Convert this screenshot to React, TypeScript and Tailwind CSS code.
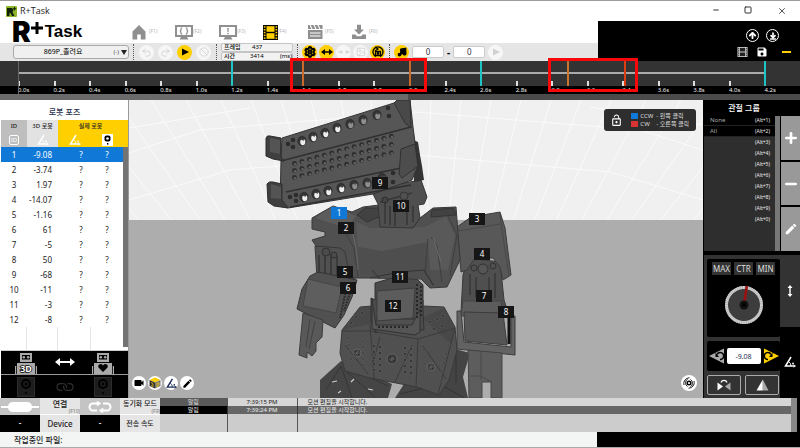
import { useState } from 'react';
import {
  ArrowDownToLine,
  ArrowUp,
  Ban,
  Image as ImageIcon,
  Link,
  Minus,
  Music,
  Plus,
  Redo2,
  Settings,
  Square,
  Undo2,
  X,
} from 'lucide-react';
import { MdEdit, MdLockOpen, MdSave, MdVideocam } from 'react-icons/md';

const poses = [
  { id: 1, angle: '-9.08' },
  { id: 2, angle: '-3.74' },
  { id: 3, angle: '1.97' },
  { id: 4, angle: '-14.07' },
  { id: 5, angle: '-1.16' },
  { id: 6, angle: '61' },
  { id: 7, angle: '-5' },
  { id: 8, angle: '50' },
  { id: 9, angle: '-68' },
  { id: 10, angle: '-11' },
  { id: 11, angle: '-3' },
  { id: 12, angle: '-8' },
];

const joints = [
  { id: 1, x: 339, y: 213 },
  { id: 2, x: 346, y: 228 },
  { id: 3, x: 477, y: 219 },
  { id: 4, x: 482, y: 254 },
  { id: 5, x: 345, y: 272 },
  { id: 6, x: 348, y: 288 },
  { id: 7, x: 484, y: 296 },
  { id: 8, x: 506, y: 312 },
  { id: 9, x: 380, y: 183 },
  { id: 10, x: 401, y: 206 },
  { id: 11, x: 400, y: 277 },
  { id: 12, x: 393, y: 306 },
];

const keyframes = [
  { time: 1.2, color: 'bg-[#1fc4c4]' },
  { time: 1.6, color: 'bg-[#c86a2c]' },
  { time: 2.2, color: 'bg-[#c86a2c]' },
  { time: 2.6, color: 'bg-[#1fc4c4]' },
  { time: 3.09, color: 'bg-[#c8742c]' },
  { time: 3.41, color: 'bg-[#e03c14]' },
  { time: 4.2, color: 'bg-[#1fc4c4]' },
];

const ranges = [
  { from: 1.53, to: 2.3 },
  { from: 2.98, to: 3.49 },
];

const groups = ['None', 'All', '', '', '', '', '', '', '', ''];

const ticks = Array.from({ length: 22 }, (_, i) => (i * 0.2).toFixed(1) + 's');

// the ruler has 22 steps of 0.2 seconds
const toPercent = (time: number) => (time / 4.4) * 100;

function AngleIcon({ className }: { className?: string }) {
  return (
    <svg viewBox="0 0 12 12" className={className} fill="none" stroke="currentColor">
      <path d="M7 1 L1.5 10 H11" strokeWidth="1.5" />
      <path d="M4.5 5.5 A5 5 0 0 1 7 10" strokeWidth="0.9" />
      <circle cx="9" cy="7.5" r="0.9" fill="currentColor" strokeWidth="0" />
      <path d="M9.5 8.8 L11.5 10 L9.5 11.2" strokeWidth="0.8" />
    </svg>
  );
}

function FilmIcon({ className, screen }: { className?: string; screen: string }) {
  return (
    <svg viewBox="0 0 15 15" className={className}>
      <rect width="15" height="15" fill="currentColor" />
      <rect x="3.5" y="1.2" width="8" height="5.6" fill={screen} />
      <rect x="3.5" y="8.2" width="8" height="5.6" fill={screen} />
      {[1.2, 4, 6.8, 9.6, 12.4].map((y) => (
        <g key={y} fill={screen}>
          <rect x="0.8" y={y} width="1.7" height="1.5" />
          <rect x="12.5" y={y} width="1.7" height="1.5" />
        </g>
      ))}
    </svg>
  );
}

function TabIcon({ name }: { name: string }) {
  if (name === 'motion') {
    return <FilmIcon className="h-[15px] w-[15px] text-black" screen="#ffcf00" />;
  }
  return (
    <svg viewBox="0 0 18 16" className="h-4 w-[18px] text-[#8f8f8f]" fill="currentColor">
      {name === 'home' && <path d="M8 1 L1.5 7.5 V15.5 H6.2 V10.5 H9.8 V15.5 H14.5 V7.5 Z" />}
      {(name === 'task' || name === 'alert') && (
        <g>
          <path d="M0 1 H18 V13 H0 Z M2 3 V11 H16 V3 Z" fillRule="evenodd" />
          <path d="M6 13 H12 L13.5 15.5 H4.5 Z" />
        </g>
      )}
      {name === 'task' && (
        <path
          d="M7.2 3.8 Q6 3.8 6 5 Q6 7 4.8 7 Q6 7 6 9 Q6 10.2 7.2 10.2 M10.8 3.8 Q12 3.8 12 5 Q12 7 13.2 7 Q12 7 12 9 Q12 10.2 10.8 10.2"
          fill="none"
          stroke="currentColor"
          strokeWidth="1.3"
        />
      )}
      {name === 'alert' && <path d="M8.2 4 H9.8 L9.5 8.2 H8.5 Z M8.3 9 H9.7 V10.3 H8.3 Z" />}
      {name === 'clip' && (
        <g>
          <path d="M1 1 H15.5 V5 H1 Z M1 6 H15.5 V15 H1 Z" />
          <path d="M3 1 L5 5 M7 1 L9 5 M11 1 L13 5 M3 9 H13.5 M3 12 H13.5" stroke="white" strokeWidth="1.1" />
        </g>
      )}
      {name === 'download' && (
        <path d="M6 0.8 H10 V5.5 H13 L8 10.5 L3 5.5 H6 Z M1 10.5 H4.5 L6 12.2 H10 L11.5 10.5 H15 V15 H1 Z" />
      )}
    </svg>
  );
}

function Round({ label, tone, children }: { label: string; tone: 'on' | 'off'; children: React.ReactNode }) {
  return (
    <button
      aria-label={label}
      className={`flex h-[15px] w-[15px] shrink-0 items-center justify-center rounded-full ${
        tone === 'on' ? 'bg-[#ffcf00] text-black' : 'bg-[#f6f6f6] text-[#d2d2d2]'
      }`}
    >
      {children}
    </button>
  );
}

function Dots() {
  return <div className="h-4 border-l border-dotted border-[#555]" />;
}

function TitleBar() {
  return (
    <div className="flex h-[21px] items-center border-t border-[#9c9c9c] bg-white pl-[6px]">
      <svg viewBox="0 0 11 11" className="h-[11px] w-[11px]">
        <rect width="11" height="11" rx="1" fill="#8fb52a" />
        <path d="M1 2 H6 L7.5 4 L6.5 6 L8.5 10 H6 L4.5 7 H3.5 V10 H1 Z M8 1 H9 V2.2 H10.2 V3.2 H9 V4.4 H8 V3.2 H7 V2.2 H8 Z" fill="#10210a" />
      </svg>
      <h1 className="ml-[3px] flex-1 font-['Open_Sans',sans-serif] text-[9px] text-[#222]">R+Task</h1>
      <div className="flex text-[#333]">
        <button aria-label="Minimize" className="flex w-8 justify-center"><Minus className="h-2 w-2" strokeWidth={3} /></button>
        <button aria-label="Maximize" className="flex w-8 justify-center"><Square className="h-2 w-2" strokeWidth={3} /></button>
        <button aria-label="Close" className="flex w-9 justify-center"><X className="h-[10px] w-[10px]" strokeWidth={2} /></button>
      </div>
    </div>
  );
}

function Header() {
  const tabs = [
    { name: 'home', key: '(F1)' },
    { name: 'task', key: '(F2)' },
    { name: 'alert', key: '(F3)' },
    { name: 'motion', key: '(F4)' },
    { name: 'clip', key: '(F5)' },
    { name: 'download', key: '(F6)' },
  ];
  return (
    <header className="flex h-10">
      <div className="flex flex-1 flex-col">
        <div className="flex h-[22px] items-center bg-white pl-3">
          <div className="flex h-[22px] w-[119px] items-center text-black">
            <span className="font-[Inter,sans-serif] text-[28px] leading-[22px] font-black">R</span>
            <svg viewBox="0 0 12 12" className="mb-2 h-3 w-3"><path d="M4.5 0 H7.5 V4.5 H12 V7.5 H7.5 V12 H4.5 V7.5 H0 V4.5 H4.5 Z" /></svg>
            <span className="ml-[2px] font-['Liberation_Sans',sans-serif] text-[17px] leading-[22px] font-bold">Task</span>
          </div>
          <nav className="flex">
            {tabs.map((tab) => (
              <button key={tab.name} aria-label={tab.name} className="flex w-11 items-center text-[5px] text-[#b5b5b5]">
                <TabIcon name={tab.name} />
                {tab.key}
              </button>
            ))}
          </nav>
        </div>
        <div className="flex h-[18px] items-center gap-1 bg-[#e5e5e5] pl-[13px]">
          <div className="relative w-[116px]">
            <select
              aria-label="Motion"
              className="block h-[14px] w-full appearance-none rounded-[3px] border border-[#aaa] bg-[#f0f0f0] pr-4 text-center text-[7px] leading-3 text-black"
            >
              <option>869P_졸려요</option>
            </select>
            <span className="pointer-events-none absolute inset-y-0 right-[2px] flex items-center gap-[2px] text-[6px] text-[#555]">
              (-)
              <svg viewBox="0 0 6 5" className="h-[5px] w-[6px]"><path d="M0 0 H6 L3 5 Z" fill="#222" /></svg>
            </span>
          </div>
          <Dots />
          <div className="flex gap-1 px-[1px]">
            <Round label="Undo" tone="off"><Undo2 className="h-[11px] w-[11px]" /></Round>
            <Round label="Redo" tone="off"><Redo2 className="h-[11px] w-[11px]" /></Round>
            <Round label="Play" tone="on">
              <svg viewBox="0 0 8 8" className="h-2 w-2"><path d="M1 0.5 L8 4 L1 7.5 Z" /></svg>
            </Round>
            <Round label="Stop" tone="off"><Ban className="h-[10px] w-[10px]" /></Round>
          </div>
          <Dots />
          <dl className="w-[72px] text-[6px] leading-[7px] text-black">
            <div className="flex rounded-[2px] border border-[#c4c4c4] bg-[#f2f2f2] pl-[2px]">
              <dt className="w-7 font-medium">프레임</dt><dd>437</dd>
            </div>
            <div className="flex rounded-[2px] border border-[#c4c4c4] bg-[#f2f2f2] pl-[2px]">
              <dt className="w-[26px] font-medium">시간</dt><dd>3414</dd><dd className="ml-auto">(ms)</dd>
            </div>
          </dl>
          <Dots />
          <div className="flex gap-[2px]">
            <Round label="Settings" tone="on">
              <Settings className="h-3 w-3" strokeWidth={4} />
            </Round>
            <Round label="Stretch" tone="on">
              <svg viewBox="0 0 12 6" className="h-[6px] w-3"><path d="M0 3 L4 0 V2.2 H8 V0 L12 3 L8 6 V3.8 H4 V6 Z" /></svg>
            </Round>
            <Round label="Shrink" tone="off">
              <svg viewBox="0 0 12 6" className="h-[6px] w-3" fill="currentColor"><path d="M5 3 L2.5 1 V2.4 H0 V3.6 H2.5 V5 Z M7 3 L9.5 1 V2.4 H12 V3.6 H9.5 V5 Z" /></svg>
            </Round>
            <Round label="Image" tone="off"><ImageIcon className="h-[10px] w-[10px]" /></Round>
            <Round label="Mirror" tone="on">
              <svg viewBox="0 0 12 12" className="h-3 w-3" fill="none" stroke="black" strokeWidth="1.3">
                <path d="M4 10.5 A5 5 0 1 1 8 10.5" /><path d="M3 1 L6 3 L3 5" /><path d="M3.5 5.5 H8.5 V9.5 H3.5 Z" /><circle cx="6" cy="7.5" r="0.8" />
              </svg>
            </Round>
          </div>
          <Dots />
          <div className="flex flex-1 items-center gap-[3px]">
            <Round label="Music" tone="on"><Music className="h-[10px] w-[10px]" fill="black" strokeWidth={3} /></Round>
            <input aria-label="Start" defaultValue="0" className="h-3 w-8 rounded-[2px] border border-[#ccc] bg-white text-center text-[8px] text-[#334]" />
            <span className="text-[10px] leading-3 font-bold">-</span>
            <input aria-label="End" defaultValue="0" className="h-3 w-8 rounded-[2px] border border-[#ccc] bg-white text-center text-[8px] text-[#334]" />
            <Round label="Play music" tone="off">
              <svg viewBox="0 0 8 8" className="h-2 w-2"><path d="M1 0.5 L8 4 L1 7.5 Z" fill="#d0d0d0" /></svg>
            </Round>
          </div>
        </div>
      </div>
      <div className="flex w-[202px] flex-col items-end justify-end gap-1 bg-black pb-[3px] text-white">
        <div className="flex gap-[7px] pr-[21px]">
          <button aria-label="Upload" className="flex h-[13px] w-[13px] items-center justify-center rounded-full border border-white">
            <ArrowUp className="h-[9px] w-[9px]" strokeWidth={5} />
          </button>
          <button aria-label="Download" className="flex h-[13px] w-[13px] items-center justify-center rounded-full border border-white">
            <ArrowDownToLine className="h-2 w-2" strokeWidth={5} />
          </button>
        </div>
        <div className="flex items-center gap-2 pr-[9px]">
          <button aria-label="Frames"><FilmIcon className="h-[10px] w-[11px] text-[#ddd]" screen="#222" /></button>
          <button aria-label="Save"><MdSave className="h-3 w-3" /></button>
          <button aria-label="Collapse" className="ml-[6px] h-[2px] w-[9px] bg-[#ffcf00]" />
        </div>
      </div>
    </header>
  );
}

function Timeline() {
  return (
    <section className="relative bg-black">
      <div className="bg-[#333] pt-[11px]">
        <div className="pr-[34px] pb-[7px] pl-[18px]">
          <div className="h-[2px] bg-[#aaa]" />
        </div>
        <div className="grid grid-cols-22 pl-[18px]">
          {ticks.map((tick) => <div key={tick} className="h-[5px] border-l-2 border-[#ddd]" />)}
        </div>
      </div>
      <div className="grid grid-cols-22 pl-[18px] text-[6px] leading-2 text-[#eee]">
        {ticks.map((tick) => <span key={tick}>{tick}</span>)}
      </div>
      <div className="pointer-events-none absolute inset-y-0 right-0 left-[18px]">
        <div className="absolute inset-y-0 left-0 w-px bg-[#666]" />
        {keyframes.map((key) => (
          <div
            key={key.time}
            className={`absolute top-0 h-[25px] w-[2px] ${key.color}`}
            style={{ left: `${toPercent(key.time)}%` }}
          />
        ))}
        {ranges.map((range) => (
          <div
            key={range.from}
            className="absolute -top-[3px] bottom-[2px] border-[3px] border-[#f80808]"
            style={{ left: `${toPercent(range.from)}%`, width: `${toPercent(range.to - range.from)}%` }}
          />
        ))}
      </div>
    </section>
  );
}

function RobotFace({ children }: { children: React.ReactNode }) {
  return (
    <svg viewBox="0 0 24 22" className="h-[22px] w-6" fill="#aaa">
      <path d="M6 1 H18 V10 H6 Z M8 3 V7.5 H16 V3 Z" fillRule="evenodd" />
      <circle cx="9.8" cy="5.2" r="1.3" />
      <circle cx="14.2" cy="5.2" r="1.3" />
      <path d="M3 11 H21 V22 H3 Z M1 14 H2.2 V22 H1 Z M21.8 14 H23 V22 H21.8 Z" />
      {children}
    </svg>
  );
}

function Servo() {
  return (
    <svg viewBox="0 0 18 20" className="h-5 w-[18px]">
      <rect x="0.5" y="0.5" width="17" height="19" fill="#1d1d1d" stroke="#2c2c2c" />
      <circle cx="9" cy="7" r="4" fill="none" stroke="#000" strokeWidth="2" />
      <circle cx="9" cy="7" r="1.5" fill="#000" />
      <circle cx="9" cy="16" r="1" fill="#000" />
    </svg>
  );
}

function PosePanel() {
  const [selected, setSelected] = useState(1);
  return (
    <aside className="flex w-[129px] shrink-0 flex-col border-r border-[#999] bg-white pl-px">
      <h2 className="h-5 text-center text-[8px] leading-[24px] font-medium text-[#27304d]">로봇 포즈</h2>
      <div className="flex flex-1">
        <div className="flex flex-1 flex-col bg-white">
          <table className="w-full table-fixed border-collapse text-[#222]">
            <colgroup>
              <col className="w-[26px]" />
              <col className="w-[31px]" />
              <col className="w-[33px]" />
              <col />
            </colgroup>
            <thead className="text-[6px] leading-[13px]">
              <tr>
                <th className="bg-[#bebebe] p-0 font-medium">ID</th>
                <th className="bg-[#e2e2e2] p-0 font-medium">3D 로봇</th>
                <th colSpan={2} className="bg-[#ffcf00] p-0 font-medium">실제 로봇</th>
              </tr>
              <tr className="text-white">
                <th className="h-[14px] bg-[#bebebe] p-0">
                  <span className="mx-auto block h-[10px] w-[10px] rounded-[2px] border border-white text-[6px] leading-2 font-normal">ID</span>
                </th>
                <th className="bg-[#e2e2e2] p-0"><AngleIcon className="mx-auto h-3 w-3" /></th>
                <th className="bg-[#ffcf00] p-0"><AngleIcon className="mx-auto h-3 w-3" /></th>
                <th className="bg-[#ffcf00] p-0">
                  <svg viewBox="0 0 11 12" className="mx-auto h-3 w-[11px]">
                    <rect width="11" height="12" fill="white" />
                    <rect x="2.5" y="1.5" width="6" height="6" rx="2" fill="black" />
                    <circle cx="5.5" cy="4.5" r="1.3" fill="white" />
                    <rect x="5" y="9" width="1.4" height="1.6" />
                  </svg>
                </th>
              </tr>
            </thead>
            <tbody className="text-[8px] leading-[15px]">
              {poses.map((pose) => (
                <tr
                  key={pose.id}
                  onClick={() => setSelected(pose.id)}
                  className={pose.id === selected ? 'bg-[#1079d8] text-white' : ''}
                >
                  <td className="p-0 text-center">{pose.id}</td>
                  <td className="py-0 pr-[6px] pl-0 text-right whitespace-nowrap">{pose.angle}</td>
                  <td className="py-0 pl-[13px] text-center">?</td>
                  <td className="p-0 text-center">?</td>
                </tr>
              ))}
            </tbody>
          </table>
          <div className="flex flex-1">
            <div className="w-[26px] border-r border-[#e4e4e4]" />
            <div className="w-[31px] border-r border-[#e4e4e4]" />
            <div className="w-[33px] border-r border-[#e4e4e4]" />
          </div>
        </div>
        <div className="mb-[3px] w-[5px] bg-[#737373]">
          <div className="h-[27px] bg-[#ffcf00]" />
        </div>
      </div>
      <div className="flex h-6 items-end justify-between border-t border-[#ccc] bg-black px-[13px]">
        <RobotFace>
          <text x="12" y="20" textAnchor="middle" fontSize="9" fontWeight="bold" fill="white" stroke="black" strokeWidth="1.5" paintOrder="stroke">3D</text>
        </RobotFace>
        <svg viewBox="0 0 20 8" className="mb-2 h-2 w-5" fill="white"><path d="M0 4 L5 0 V3 H15 V0 L20 4 L15 8 V5 H5 V8 Z" /></svg>
        <RobotFace>
          <path d="M12 20 L7.5 15.5 A2.4 2.4 0 0 1 12 13.5 A2.4 2.4 0 0 1 16.5 15.5 Z" fill="black" />
        </RobotFace>
      </div>
      <div className="flex h-6 items-center justify-between border-t border-[#999] bg-black px-4">
        <Servo />
        <Link className="h-4 w-4 rotate-45 text-[#2c2c2c]" />
        <Servo />
      </div>
    </aside>
  );
}

const upperHoles = [[302, 141], [313, 137], [325, 133], [337, 128], [350, 124], [363, 120], [377, 115]];
const lowerHoles = [[304, 197], [316, 194], [328, 191], [341, 188], [354, 185], [367, 183], [382, 178]];
const endHoles = [[293, 140], [293, 147], [288, 144], [388, 108], [389, 116], [296, 195], [296, 201], [290, 197], [393, 173], [393, 182]];
const gridLines = [15, 45, 75, 105, 135, 165, 195, 230, 265, 300, 340, 385];

function Robot() {
  return (
    <g strokeLinejoin="round">
      {/* feet */}
      <path d="M320 398 V380 L341 361 L392 384 L388 398 Z" fill="#454545" />
      <path d="M326 390 L341 366 M345 366 L388 386 M341 366 L352 398 M345 370 L375 397" stroke="#363636" fill="none" />
      <path d="M332 382 L337 381 M368 389 L373 390 M354 379 L351 382 M341 391 L338 393" stroke="#ccc" strokeWidth="1.2" />
      <path d="M395 398 L404 384 L440 382 L455 349 L470 353 L463 377 L468 398 Z" fill="#444" />
      <path d="M400 394 L440 384 L464 398 M456 355 V383" stroke="#333" fill="none" />

      {/* pelvis */}
      <path d="M342 330 L360 307 L372 306 V300 H423 V306 L444 307 L455 327 L457 350 L449 380 L439 395 L417 387 L370 378 L345 371 L340 353 Z" fill="#505050" stroke="#393939" />
      <path d="M342 330 L360 307 L372 307 L370 324 Z" fill="#484848" />
      <path d="M422 318 L444 308 L455 328 L451 344 Z" fill="#484848" />
      <path d="M370 324 L374 378 M370 331 L418 339 L416 387 M418 339 L455 328 M455 328 L438 394 M342 331 L371 331 M345 345 L368 374 M380 337 L372 366 M412 345 L395 382 M423 346 L446 379" stroke="#3b3b3b" fill="none" />
      {[[351, 323], [356, 317], [362, 313], [430, 322], [437, 319], [443, 316], [434, 329], [442, 326]].map(([x, y]) => (
        <ellipse key={`${x}-${y}`} cx={x} cy={y} rx="2" ry="1.3" fill="#343434" stroke="#686868" strokeWidth="0.5" />
      ))}
      {[0, 1, 2, 3, 4].map((i) => (
        <g key={i} fill="#363636" stroke="#6a6a6a" strokeWidth="0.5">
          <circle cx="374" cy={346 + i * 6} r="1.8" />
          <circle cx="380" cy={347 + i * 6} r="1.8" />
          <circle cx="405" cy={348 + i * 6} r="1.8" />
          <circle cx="411" cy={349 + i * 6} r="1.8" />
          <circle cx={348 + i} cy={338 + i * 7} r="1.3" />
          <circle cx={363} cy={341 + i * 6} r="1.3" />
          <circle cx="424" cy={350 + i * 7} r="1.3" />
          <circle cx={448 - i * 2} cy={345 + i * 9} r="1.3" />
        </g>
      ))}
      {[[357, 353, 4], [392, 359, 5], [431, 367, 4]].map(([x, y, r]) => (
        <g key={x}>
          <circle cx={x} cy={y} r={r} fill="#343434" stroke="#666" />
          <path d={`M${x - 3} ${y} H${x + 3} M${x} ${y - 3} V${y + 3} M${x - 2} ${y + 2} L${x + 2} ${y - 2}`} stroke="#666" strokeWidth="0.8" />
        </g>
      ))}

      {/* waist */}
      <path d="M375 283 L392 278 L417 279 L423 285 V310 L424 330 H419 L418 319 H376 V333 L371 322 V298 L375 300 Z" fill="#4b4b4b" stroke="#333" />
      <path d="M377 291 L415 288 L413 318 L377 321 Z" fill="#5c5c5c" stroke="#3d3d3d" />
      <path d="M372 299 L376 325 L412 325 L420 309 V332 L415 335 L372 329 Z" fill="#555" stroke="#333" />
      <path d="M417 284 V318 M421 286 V316 M378 327 H408" stroke="#272727" strokeWidth="2" strokeDasharray="2 2" />

      {/* left arm */}
      <path d="M315 246 H350 L352 274 L357 277 L349 281 L317 278 Z" fill="#505050" stroke="#393939" />
      <path d="M319 255 V275 M325 252 V277 M331 254 V278 M337 256 V279" stroke="#353535" strokeWidth="1.5" />
      <circle cx="326" cy="252" r="4" fill="#4b4b4b" stroke="#303030" />
      <circle cx="334" cy="255" r="3" fill="#4b4b4b" stroke="#303030" />
      <path d="M310 276 L318 272 L357 280 L352 297 L344 315 L335 328 L297 309 L302 289 Z" fill="#515151" stroke="#353535" />
      <path d="M308 279 L342 287 L336 313 L303 306 Z" fill="#5e5e5e" stroke="#454545" />
      <path d="M346 290 L340 318 M351 290 L344 311" stroke="#2e2e2e" strokeWidth="2" strokeDasharray="2 1" />
      <path d="M303 313 L323 320 L322 337 L316 343 V351 L312 356 L307 352 V358 L299 355 Z" fill="#595959" stroke="#3d3d3d" />
      <path d="M310 319 L306 347 M315 321 L309 349" stroke="#414141" />

      {/* right arm */}
      <path d="M463 275 L468 258 L500 262 L504 300 L508 312 L461 312 Z" fill="#4f4f4f" stroke="#383838" />
      <path d="M457 227 L471 217 L500 212 L505 228 L511 275 L503 280 L500 267 L493 258 H475 L467 270 L461 272 Z" fill="#585858" stroke="#3c3c3c" />
      <path d="M458 231 L500 224 M500 214 L502 230 L509 275" stroke="#474747" fill="none" />
      <circle cx="483" cy="269" r="5" fill="#555" stroke="#323232" />
      <circle cx="474" cy="268" r="3" fill="#4e4e4e" stroke="#323232" />
      <circle cx="493" cy="266" r="3" fill="#4e4e4e" stroke="#323232" />
      <path d="M470 274 V295 M476 277 V297 M489 277 V297 M495 273 V298" stroke="#353535" strokeWidth="1.3" />
      <path d="M463 301 L501 301 L503 316 L461 316 Z" fill="#5c5c5c" stroke="#454545" />
      <path d="M457 311 H461 L464 342 L511 347 V316 H515 V355 L457 349 Z" fill="#626262" stroke="#3c3c3c" />
      <path d="M464 312 L503 313 L507 345 L465 341 Z" fill="#565656" stroke="#3c3c3c" />
      <path d="M509 317 V344" stroke="#111" strokeWidth="3" />
      <path d="M468 350 L502 353 V398 H491 V382 H482 V398 H469 Z" fill="#5d5d5d" stroke="#444" />
      <path d="M481 352 V380 M470 376 H480 L492 382" stroke="#494949" fill="none" />

      {/* torso */}
      <path d="M333 206 L352 212 L363 207 L379 205 L382 218 H420 L433 208 L456 207 L458 233 L460 260 L447 287 L430 288 L421 279 L370 278 H350 L345 252 L340 248 L316 246 L312 240 L325 236 V232 L312 229 V218 Z" fill="#505050" stroke="#383838" />
      <path d="M315 218 L333 206 L356 216 L348 227 L337 225 Z" fill="#5c5c5c" />
      <path d="M356 222 L371 228 L425 227 L446 216 L455 235 L448 270 L430 270 L424 259 L382 262 L358 250 Z" fill="#595959" />
      <path d="M353 246 L382 251 L428 242 L431 280 L418 279 L370 275 L358 270 Z" fill="#4e4e4e" />
      <path d="M357 215 L365 208 L379 208 L381 216 L367 222 Z M432 210 L453 208 L456 215 L431 217 Z" fill="#424242" stroke="#343434" />
      <path d="M340 223 L354 248 L358 277 M431 237 L437 246 L442 282 M428 239 L425 273 L434 285 M448 216 L457 235 L450 276" stroke="#3f3f3f" fill="none" />
      <path d="M350 222 C353 238 356 238 358 270 M433 238 L441 262" stroke="#696969" fill="none" />
      <path d="M370 278 L400 272 L424 270 L433 285 M372 270 L380 279" stroke="#333" fill="none" />

      {/* neck */}
      <path d="M373 194 L398 184 L421 180 L427 197 L424 204 L418 205 L420 218 L413 228 L380 227 L378 204 Z" fill="#4f4f4f" stroke="#343434" />
      <path d="M385 198 V224 M390 206 V225 M395 200 V226 M407 212 V225 M413 206 V222 M380 202 L412 193" stroke="#363636" strokeWidth="1.5" />
      <circle cx="385" cy="200" r="3" fill="#444" stroke="#2c2c2c" />
      <circle cx="404" cy="196" r="4" fill="#505050" stroke="#333" />

      {/* launcher */}
      <path d="M413 140 L418 142 L420 155 L422 166 L424 180 L414 182 Z" fill="#343434" />
      <path d="M282 138 L394 103 L398 100 H410 L413 127 L418 165 L412 180 L373 194 L288 208 L280 203 L281 160 Z" fill="#565656" stroke="#343434" />
      <path d="M281 161 L411 127" stroke="#303030" strokeWidth="1.6" />
      <path d="M286 192 L401 168 M290 207 L411 185" stroke="#303030" strokeWidth="1.4" fill="none" />
      <path d="M394 103 L397 100 H410 L411 128 L405 123 Z" fill="#494949" stroke="#333" />
      <path d="M401 149 L415 144 L418 166 L402 178 L399 174 Z" fill="#4d4d4d" stroke="#303030" />
      {['M266 138 Q267 135 270 136 L281 138 V157 L284 161 L273 159 L266 156 Z', 'M267 184 Q269 181 273 182 L282 184 V200 L288 208 L274 206 L268 202 Z'].map((d) => (
        <path key={d} d={d} fill="#3f3f3f" stroke="#2c2c2c" />
      ))}
      <path d="M270 138 L280 140 V154 L270 152 Z M271 184 L281 187 V199 L271 198 Z" fill="#545454" />
      {[...upperHoles, ...lowerHoles].map(([x, y]) => (
        <g key={`${x}-${y}`}>
          <ellipse cx={x} cy={y} rx="4.2" ry="4.8" fill="#333" stroke="#2a2a2a" strokeWidth="0.6" />
          <ellipse cx={x + 0.8} cy={y + 1.1} rx="2.6" ry="3.1" fill={x < 345 ? '#ededed' : '#8e8e8e'} />
          <path d={`M${x - 1} ${y - 2} L${x + 2} ${y - 1}`} stroke="#444" strokeWidth="1.4" />
        </g>
      ))}
      {endHoles.map(([x, y]) => <circle key={`${x}-${y}`} cx={x} cy={y} r="2.3" fill="#2c2c2c" />)}
      {Array.from({ length: 42 }, (_, i) => {
        const col = i % 14;
        const row = Math.floor(i / 14);
        const x = 294.5 + col * 7.45;
        const y = 163.5 - col * 2.1 + row * (7 + col * 0.1);
        return (
          <g key={i}>
            <circle cx={x} cy={y} r="2.4" fill="#2e2e2e" />
            <circle cx={x + 0.6} cy={y + 0.8} r="1.3" fill="#626262" />
          </g>
        );
      })}
    </g>
  );
}

function Viewport() {
  return (
    <main className="relative flex-1 bg-[#adadad]">
      <svg viewBox="129 100 574 298" preserveAspectRatio="xMidYMid slice" className="absolute inset-0 h-full w-full">
        <rect x="129" y="100" width="574" height="120" fill="#f0f0f0" />
        <g stroke="#fafafa">
          {gridLines.map((offset) => (
            <g key={offset}>
              <path d={`M${416 - offset} 100 L${416 - offset * 0.72} 220`} />
              <path d={`M${416 + offset} 100 L${416 + offset * 0.72} 220`} />
            </g>
          ))}
          <path d="M129 153 L200 130 L416 112 L640 130 L703 150 M129 200 L230 170 L416 155 L610 172 L703 200 M129 128 L250 108 M703 125 L590 107" fill="none" />
        </g>
        <rect x="129" y="220" width="574" height="178" fill="#adadad" />
        <Robot />
        {joints.map((joint) => (
          <g key={joint.id}>
            <rect x={joint.x - 8} y={joint.y - 6} width="16" height="12" fill={joint.id === 1 ? '#1079d8' : '#161616'} />
            <text x={joint.x} y={joint.y + 3} textAnchor="middle" fontSize="8" fill="white">{joint.id}</text>
          </g>
        ))}
      </svg>
      <div className="absolute top-[9px] right-[7px] flex items-center gap-2 rounded-[3px] bg-[#2e2e2e] py-[3px] pr-[7px] pl-[6px] text-[6px] leading-2 text-[#ddd]">
        <button aria-label="Unlock"><MdLockOpen className="h-[13px] w-[13px] text-white" /></button>
        <ul>
          <li className="flex items-center gap-[2px]">
            <span className="h-[6px] w-[7px] bg-[#1079d8]" />
            <span className="w-[14px]">CCW</span>- 왼쪽 클릭
          </li>
          <li className="flex items-center gap-[2px]">
            <span className="h-[6px] w-[7px] bg-[#d83232]" />
            <span className="w-[14px]">CW</span>- 오른쪽 클릭
          </li>
        </ul>
      </div>
      <div className="absolute bottom-2 left-[3px] flex gap-[2px] text-black">
        <button aria-label="Camera" className="flex h-[14px] w-[14px] items-center justify-center rounded-full bg-white"><MdVideocam className="h-3 w-3" /></button>
        <button aria-label="3D" className="flex h-[14px] w-[14px] items-center justify-center rounded-full bg-white">
          <svg viewBox="0 0 12 12" className="h-3 w-3">
            <path d="M6 0.5 L11.5 3 L6 5.5 L0.5 3 Z" fill="#ffcf00" />
            <path d="M0.5 3 L6 5.5 V11.5 L0.5 9 Z" fill="#333" />
            <path d="M11.5 3 L6 5.5 V11.5 L11.5 9 Z" fill="#777" />
            <path d="M2 5.5 L4 6.5 V9.5 L2 8.5 M8 6 V10 L10 8 V6 Z" stroke="#ffcf00" strokeWidth="0.7" fill="none" />
          </svg>
        </button>
        <button aria-label="Angle" className="flex h-[14px] w-[14px] items-center justify-center rounded-full bg-white"><AngleIcon className="h-[11px] w-[11px] text-[#1a2c58]" /></button>
        <button aria-label="Edit" className="flex h-[14px] w-[14px] items-center justify-center rounded-full bg-white"><MdEdit className="h-[11px] w-[11px]" /></button>
      </div>
      <button aria-label="Rotate view" className="absolute right-[6px] bottom-[7px] flex h-4 w-4 items-center justify-center rounded-full bg-white">
        <svg viewBox="0 0 12 12" className="h-3 w-3" fill="none" stroke="black">
          <circle cx="6" cy="6" r="1.8" strokeWidth="1.4" />
          <path d="M4.5 2.5 C2 3.5 2 8 4.5 9.5 M7.5 2.5 C10 4 10 8.5 7.5 9.5 M1 8 C0 4 3 1 6.5 0.8 M11 4 C12 8 9 11 5.5 11.2" strokeWidth="0.9" />
        </svg>
      </button>
    </main>
  );
}

function JointPanel() {
  const [angle, setAngle] = useState('-9.08');
  return (
    <aside className="flex w-[97px] shrink-0 flex-col bg-black pl-px text-white">
      <h2 className="h-[15px] pr-4 text-center text-[8px] leading-[15px] font-medium">관절 그룹</h2>
      <div className="flex flex-1">
        <ul className="flex-1 bg-[#2e2e2e] text-[6px] leading-[11px] text-[#aaa]">
          {groups.map((group, i) => (
            <li key={i} className={`flex h-[11px] justify-between border-b pr-[5px] pl-[6px] ${group ? 'border-[#222] bg-black' : 'border-transparent'}`}>
              <span>{group}</span>
              <span className="text-[5px] text-[#eee]">(Alt+{(i + 1) % 10})</span>
            </li>
          ))}
        </ul>
        <div className="mt-px w-[5px] bg-[#777]" />
        <div className="flex w-5 flex-col gap-[2px] pt-px pl-px">
          <button aria-label="Add group" className="flex flex-1 items-center justify-center bg-[#999]"><Plus className="h-4 w-4" strokeWidth={4} /></button>
          <button aria-label="Remove group" className="flex flex-1 items-center justify-center bg-[#999]"><Minus className="h-4 w-4" strokeWidth={4} /></button>
          <button aria-label="Edit group" className="flex flex-1 items-center justify-center bg-[#999]"><MdEdit className="h-[14px] w-[14px]" /></button>
        </div>
      </div>
      <div className="mt-1 flex h-[143px]">
        <div className="flex flex-1 flex-col gap-1 bg-[#333] pt-1 pb-[3px] pl-[3px]">
          <div className="flex flex-1 flex-col items-center justify-between rounded-[2px] bg-black pt-[3px] pb-3">
            <div className="flex gap-[3px] text-[8px] leading-[13px] text-[#ddd]">
              <button className="w-[19px] bg-[#333]">MAX</button>
              <button className="w-[19px] bg-[#333]">CTR</button>
              <button className="w-[19px] bg-[#333]">MIN</button>
            </div>
            <svg viewBox="0 0 40 40" className="h-10 w-10">
              <circle cx="20" cy="20" r="17.5" fill="#3d3d3d" stroke="#b5b5b5" strokeWidth="3" />
              <circle cx="20" cy="20" r="17.5" fill="none" stroke="#e5e5e5" strokeWidth="3" strokeDasharray="0.6 1.2" />
              <path d="M20 20 L22.8 1" stroke="#9b1111" strokeWidth="2.6" />
              <circle cx="20" cy="20" r="4.5" fill="#111" />
              <circle cx="20" cy="20" r="2" fill="black" />
            </svg>
          </div>
          <div className="flex h-[30px] items-center justify-center gap-[2px] rounded-[2px] bg-black">
            <button aria-label="Rotate left">
              <svg viewBox="0 0 16 16" className="h-4 w-4">
                <path d="M0 8 L15 0.5 V15.5 Z" fill="#aaa" />
                <path d="M8 6.5 A3.5 3.5 0 1 1 11 11.5" fill="none" stroke="black" strokeWidth="1.4" /><path d="M6.5 4.5 V9 H10 Z" />
              </svg>
            </button>
            <input
              aria-label="Angle"
              value={angle}
              onChange={(e) => setAngle(e.target.value)}
              className="h-4 w-[34px] rounded-[2px] bg-white text-center text-[7px] text-[#1c2c55]"
            />
            <button aria-label="Rotate right">
              <svg viewBox="0 0 16 16" className="h-4 w-4">
                <path d="M16 8 L1 0.5 V15.5 Z" fill="#ffcf00" />
                <path d="M8 6.5 A3.5 3.5 0 1 0 5 11.5" fill="none" stroke="black" strokeWidth="1.4" /><path d="M9.5 4.5 V9 H6 Z" />
              </svg>
            </button>
          </div>
          <div className="flex h-5 gap-1 pr-px">
            <button aria-label="Flip" className="flex flex-1 items-center justify-center rounded-[2px] border border-[#aaa]">
              <svg viewBox="0 0 14 12" className="h-3 w-[14px]">
                <path d="M0.5 3.5 L6 7.5 L0.5 11.5 Z" fill="white" /><path d="M13.5 3.5 L8 7.5 L13.5 11.5 Z" fill="#aaa" />
                <path d="M4 3.5 A3.2 3.2 0 0 1 10 3.5" fill="none" stroke="white" strokeWidth="1.2" />
              </svg>
            </button>
            <button aria-label="Mirror pose" className="flex flex-1 items-center justify-center rounded-[2px] border border-[#aaa]">
              <svg viewBox="0 0 13 12" className="h-3 w-[13px]"><path d="M6.8 0.5 V11.5 H0.5 Z" fill="white" /><path d="M6.8 0.5 V11.5 H12.5 Z" fill="#aaa" /></svg>
            </button>
          </div>
        </div>
        <div className="flex w-5 flex-col">
          <button aria-label="Position" className="flex flex-1 items-center justify-center bg-[#333]">
            <svg viewBox="0 0 6 12" className="h-3 w-[6px]" fill="white"><path d="M3 0 L5.5 3 H3.7 V9 H5.5 L3 12 L0.5 9 H2.3 V3 H0.5 Z" /></svg>
          </button>
          <button aria-label="Angle mode" className="flex flex-1 items-center justify-center bg-black"><AngleIcon className="h-3 w-3" /></button>
        </div>
      </div>
    </aside>
  );
}

function Footer() {
  return (
    <footer>
      <div className="flex h-[34px] bg-black">
        <div className="grid w-40 grid-cols-4 grid-rows-2 text-center text-[8px] leading-4 font-medium text-[#222]">
          <div className="flex items-center bg-[#c4c4c4]">
            <svg viewBox="0 0 38 12" className="h-3 w-full"><path d="M0 5 H7 Q8 1 12 1 H26 Q30 1 31 5 H38 V7 H31 Q30 11 26 11 H12 Q8 11 7 7 H0 Z" fill="white" /></svg>
          </div>
          <button className="flex flex-col border-b border-white bg-[#e5e5e5]">
            <span className="w-full leading-[11px]">연결</span>
            <span className="self-end text-[5px] leading-[5px] font-normal text-[#777]">(F10)</span>
          </button>
          <div className="flex items-center justify-center bg-[#c4c4c4]">
            <svg viewBox="0 0 24 12" className="h-3 w-6" fill="none" stroke="white" strokeWidth="2">
              <path d="M10 2.5 H5 A3.5 3.5 0 0 0 5 9.5 H9 M14 9.5 H19 A3.5 3.5 0 0 0 19 2.5 H15" />
              <path d="M9 0 L13 2.5 L9 5 Z M15 7 L11 9.5 L15 12 Z" fill="white" strokeWidth="0.5" />
            </svg>
          </div>
          <button className="flex flex-col border-b border-white bg-[#e5e5e5]">
            <span className="w-full text-[7px] leading-[11px] whitespace-nowrap">동기화 모드</span>
            <span className="self-end text-[5px] leading-[5px] font-normal text-[#777]">(F9)</span>
          </button>
          <span className="bg-black text-white">-</span>
          <button className="bg-[#e5e5e5]">Device</button>
          <span className="bg-black text-white">-</span>
          <button className="bg-[#e5e5e5] text-[7px]">전송 속도</button>
        </div>
        <div className="flex-1 bg-[#ccc]">
          <table className="w-full table-fixed border-collapse text-[6px] leading-2">
            <colgroup><col className="w-[67px]" /><col className="w-[70px]" /><col /></colgroup>
            <tbody>
              <tr className="bg-[#d6d6d6] text-[#222]">
                <td className="border-r border-[#555] bg-[#5a5a5a] p-0 text-center text-[#ddd]">알림</td>
                <td className="border-r border-[#555] p-0 text-center">7:39:15 PM</td>
                <td className="py-0 pl-[10px]">모션 편집을 시작합니다.</td>
              </tr>
              <tr className="bg-[#666] text-[#eee]">
                <td className="border-r border-[#333] bg-black p-0 text-center">알림</td>
                <td className="border-r border-[#333] p-0 text-center">7:39:24 PM</td>
                <td className="py-0 pl-[10px]">모션 편집을 시작합니다.</td>
              </tr>
              <tr>
                <td className="h-[18px] border-r border-[#555] p-0" />
                <td className="border-r border-[#555] p-0" />
                <td className="p-0" />
              </tr>
            </tbody>
          </table>
        </div>
        <div className="mr-[3px] w-[6px] bg-[#888]" />
      </div>
      <div className="flex h-4 border-b border-[#aaa] bg-black text-[8px] leading-[15px] text-[#222]">
        <p className="flex-1 bg-[#f3f5f4] pl-[14px] font-medium">작업중인 파일:</p>
        <div className="w-[203px]" />
      </div>
    </footer>
  );
}

export default function App() {
  return (
    <div className="flex min-h-screen flex-col bg-black font-['Noto_Sans','Noto_Sans_CJK_KR',sans-serif]">
      <TitleBar />
      <Header />
      <Timeline />
      <div className="flex h-[6px] bg-[#4a4a4a]">
        <div className="w-[51%] bg-[#6a6a6a]" />
      </div>
      <div className="flex flex-1">
        <PosePanel />
        <Viewport />
        <JointPanel />
      </div>
      <Footer />
    </div>
  );
}
